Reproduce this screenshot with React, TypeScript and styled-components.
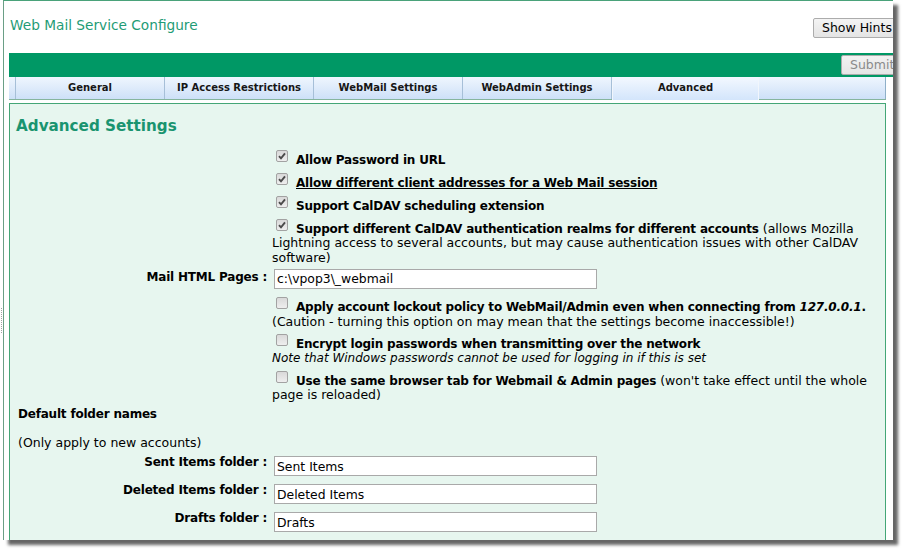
import React from "react";
import styled, { createGlobalStyle } from "styled-components";

const GlobalStyle = createGlobalStyle`
  html, body {
    margin: 0;
    padding: 0;
    background: #ffffff;
  }
  body {
    font-family: "DejaVu Sans", Verdana, sans-serif;
    font-size: 12px;
    color: #000;
  }
`;

const Screen = styled.div`
  display: flex;
  align-items: flex-start;
  width: 908px;
  height: 556px;
  overflow: hidden;
`;

const Gutter = styled.div`
  width: 3px;
  padding-top: 308px;
  flex-shrink: 0;
`;

const Grip = styled.div`
  width: 0;
  height: 25px;
  margin-left: 1px;
  border-left: 1px dotted #a0a0a0;
`;

const Window = styled.div`
  width: 890px;
  height: 540px;
  box-sizing: border-box;
  border-top: 1px solid #4aa27a;
  border-left: 1px solid #6a9f86;
  background: #ffffff;
  overflow: hidden;
  box-shadow: 5px 5px 3px rgba(0, 0, 0, 0.6);
`;

const Page = styled.div`
  width: 888px;
  padding-left: 5px;
`;

const Header = styled.div`
  display: flex;
  justify-content: space-between;
  align-items: flex-start;
  height: 52px;
`;

const Title = styled.div`
  margin: 15.6px 0 0 1px;
  font-size: 13.7px;
  color: #1f9c76;
`;

const Button = styled.button<{ $w: number; $disabled?: boolean }>`
  width: ${(p) => p.$w}px;
  height: 20px;
  padding: 0 0 0 8px;
  text-align: left;
  font-family: "DejaVu Sans", Verdana, sans-serif;
  font-size: 12.5px;
  line-height: 18px;
  color: ${(p) => (p.$disabled ? "#8a8a8a" : "#000")};
  background: ${(p) =>
    p.$disabled ? "linear-gradient(#f2f2f2, #e6e6e6)" : "linear-gradient(#f4f4f4, #e4e4e4)"};
  border: 1px solid #acacac;
  border-radius: 2px;
  box-sizing: border-box;
`;

const HintsButton = styled(Button)`
  margin-top: 16.5px;
`;

const GreenBar = styled.div`
  display: flex;
  justify-content: flex-end;
  align-items: flex-start;
  height: 24px;
  background: #009865;
`;

const SubmitButton = styled(Button)`
  margin-top: 2px;
  height: 19.5px;
`;

const TabStrip = styled.div`
  display: flex;
  align-items: flex-start;
  width: 877px;
  height: 22px;
  border-bottom: 1px solid #86b59e;
`;

const tabFill = "linear-gradient(#eff6fe, #cde0f8)";

const TabSpacer = styled.div`
  width: 7px;
  height: 22px;
  box-sizing: border-box;
  background: ${tabFill};
  border-right: 1px solid #a6bfd8;
`;

const Tab = styled.div<{ $active?: boolean }>`
  width: ${(p) => (p.$active ? 147 : 149)}px;
  height: ${(p) => (p.$active ? 23 : 22)}px;
  margin-bottom: ${(p) => (p.$active ? -1 : 0)}px;
  box-sizing: border-box;
  line-height: 22px;
  text-align: center;
  font-size: 10px;
  font-weight: bold;
  color: #161616;
  background: ${(p) => (p.$active ? "linear-gradient(#f3f8ff, #d3e5fb)" : tabFill)};
  border-right: 1px solid ${(p) => (p.$active ? "#f1f6fc" : "#a6bfd8")};
  border-left: ${(p) => (p.$active ? "1px solid #f1f6fc" : "none")};
`;

const TabFiller = styled.div`
  flex: 1;
  height: 22px;
  box-sizing: border-box;
  background: ${tabFill};
  border-right: 1px solid #8fb0c9;
`;

const Content = styled.div`
  width: 877px;
  box-sizing: border-box;
  margin-top: 3px;
  padding: 0 2px 30px 6px;
  background: #e7f6ef;
  border: 1px solid #44a676;
`;

const Heading = styled.h2`
  margin: 12.6px 0 14.05px;
  font-size: 15.2px;
  font-weight: bold;
  line-height: normal;
  color: #1a9470;
`;

const FormRow = styled.div<{ $pt?: number; $pb?: number }>`
  display: grid;
  grid-template-columns: 254px 1fr;
  padding: ${(p) => p.$pt ?? 4.25}px 0 ${(p) => p.$pb ?? 4.25}px;
`;

const Label = styled.div<{ $offset?: number }>`
  margin-top: ${(p) => p.$offset ?? 0}px;
  padding-right: 3px;
  text-align: right;
  font-size: 12px;
  font-weight: bold;
  letter-spacing: -0.2px;
  line-height: 14.5px;
`;

const Value = styled.div`
  padding: 0 2px;
  font-size: 12.5px;
  line-height: 14.5px;
`;

const FullCell = styled.div`
  grid-column: 1 / -1;
  padding-left: 2px;
  font-size: 12.5px;
  line-height: 14.5px;
`;

const Box = styled.span`
  display: inline-block;
  width: 12px;
  height: 12px;
  box-sizing: border-box;
  margin: -3px 8px 0 4px;
  vertical-align: 2px;
  border: 1px solid #a2a2a2;
  border-radius: 2px;
  background: linear-gradient(#d9d9d9, #eeeeee);

  svg {
    display: block;
  }
`;

const Strong = styled.b<{ $underline?: boolean }>`
  font-size: 12px;
  font-weight: bold;
  letter-spacing: -0.2px;
  text-decoration: ${(p) => (p.$underline ? "underline" : "none")};
`;

const Note = styled.i`
  font-size: 12px;
  font-style: italic;
`;

const TextInput = styled.input`
  display: block;
  width: 323px;
  height: 20px;
  box-sizing: border-box;
  margin: 0 0 0 2px;
  padding: 0 2px;
  border: 1px solid #a9a9a9;
  background: #ffffff;
  font-family: "DejaVu Sans", Verdana, sans-serif;
  font-size: 12.4px;
  color: #000;
  outline: none;
`;

function Check({ checked }: { checked?: boolean }) {
  return (
    <Box>
      {checked && (
        <svg width="10" height="10" viewBox="0 0 10 10">
          <path d="M2 5.2 L4 7.4 L8 2.4" fill="none" stroke="#4a4a4a" strokeWidth="1.9" />
        </svg>
      )}
    </Box>
  );
}

const tabs = ["General", "IP Access Restrictions", "WebMail Settings", "WebAdmin Settings", "Advanced"];

export default function App() {
  return (
    <>
      <GlobalStyle />
      <Screen>
        <Gutter>
          <Grip />
        </Gutter>
        <Window>
          <Page>
            <Header>
              <Title>Web Mail Service Configure</Title>
              <HintsButton $w={84}>Show Hints</HintsButton>
            </Header>
            <GreenBar>
              <SubmitButton $w={56} $disabled>
                Submit
              </SubmitButton>
            </GreenBar>
            <TabStrip>
              <TabSpacer />
              {tabs.map((t) => (
                <Tab key={t} $active={t === "Advanced"}>
                  {t}
                </Tab>
              ))}
              <TabFiller />
            </TabStrip>
            <Content>
              <Heading>Advanced Settings</Heading>

              <FormRow>
                <Label />
                <Value>
                  <Check checked />
                  <Strong>Allow Password in URL</Strong>
                </Value>
              </FormRow>
              <FormRow>
                <Label />
                <Value>
                  <Check checked />
                  <Strong $underline>Allow different client addresses for a Web Mail session</Strong>
                </Value>
              </FormRow>
              <FormRow>
                <Label />
                <Value>
                  <Check checked />
                  <Strong>Support CalDAV scheduling extension</Strong>
                </Value>
              </FormRow>
              <FormRow $pb={1.25}>
                <Label />
                <Value>
                  <Check checked />
                  <Strong>Support different CalDAV authentication realms for different accounts</Strong> (allows
                  Mozilla Lightning access to several accounts, but may cause authentication issues with other CalDAV
                  software)
                </Value>
              </FormRow>

              <FormRow $pt={2} $pb={7.3}>
                <Label $offset={1}>Mail HTML Pages :</Label>
                <Value>
                  <TextInput defaultValue="c:\vpop3\_webmail" />
                </Value>
              </FormRow>

              <FormRow $pb={3.15}>
                <Label />
                <Value>
                  <Check />
                  <Strong>
                    Apply account lockout policy to WebMail/Admin even when connecting from <i>127.0.0.1</i>.
                  </Strong>
                  <br />
                  (Caution - turning this option on may mean that the settings become inaccessible!)
                </Value>
              </FormRow>
              <FormRow $pb={3.75}>
                <Label />
                <Value>
                  <Check />
                  <Strong>Encrypt login passwords when transmitting over the network</Strong>
                  <br />
                  <Note>Note that Windows passwords cannot be used for logging in if this is set</Note>
                </Value>
              </FormRow>
              <FormRow $pb={2}>
                <Label />
                <Value>
                  <Check />
                  <Strong>Use the same browser tab for Webmail &amp; Admin pages</Strong> (won't take effect until
                  the whole page is reloaded)
                </Value>
              </FormRow>

              <FormRow $pt={2} $pb={0}>
                <FullCell>
                  <Strong>Default folder names</Strong>
                  <br />
                  <br />
                  (Only apply to new accounts)
                </FullCell>
              </FormRow>

              <FormRow $pt={6.2} $pb={1.8}>
                <Label $offset={-1.7}>Sent Items folder :</Label>
                <Value>
                  <TextInput defaultValue="Sent Items" />
                </Value>
              </FormRow>
              <FormRow $pt={6.2} $pb={1.8}>
                <Label $offset={-1.7}>Deleted Items folder :</Label>
                <Value>
                  <TextInput defaultValue="Deleted Items" />
                </Value>
              </FormRow>
              <FormRow $pt={6.2} $pb={1.8}>
                <Label $offset={-1.7}>Drafts folder :</Label>
                <Value>
                  <TextInput defaultValue="Drafts" />
                </Value>
              </FormRow>
            </Content>
          </Page>
        </Window>
      </Screen>
    </>
  );
}
